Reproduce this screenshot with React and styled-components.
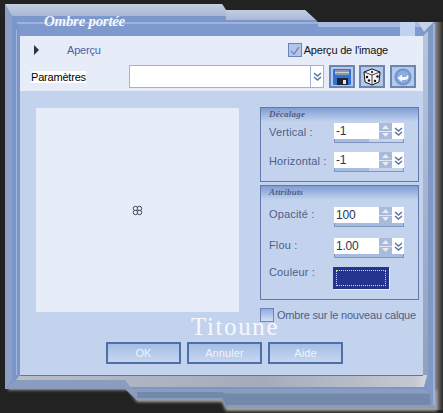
import React from "react";
import styled, { createGlobalStyle } from "styled-components";

const Global = createGlobalStyle`
    html, body { margin: 0; padding: 0; background: #222222; }
`;

const Shell = styled.div`
    position: relative;
    width: 443px;
    height: 413px;
    overflow: hidden;
    background: #222222;
    font-family: "Liberation Sans", Arial, sans-serif;
    font-size: 11px;
    letter-spacing: -0.2px;
`;

const Art = styled.svg`
    position: absolute;
    left: 0;
    top: 0;
`;

const Title = styled.div`
    position: absolute;
    left: 44px;
    top: 13px;
    font-family: "Liberation Serif", serif;
    font-style: italic;
    font-weight: bold;
    font-size: 15px;
    letter-spacing: -0.3px;
    color: #f4f7fd;
`;

const Window = styled.div`
    padding: 36px 20px 38px;
    position: relative;
`;

const Panel = styled.div`
    position: relative;
    height: 339px;
    background: #c3d3ee;
    display: flex;
    flex-direction: column;
`;

const Head = styled.div`
    height: 55px;
    box-sizing: border-box;
    background: #e6ecf8;
    padding: 6px 7px 0 14px;
    display: flex;
    flex-direction: column;
    gap: 7px;
`;

const PreviewRow = styled.div`
    height: 16px;
    display: flex;
    align-items: center;
`;

const Arrow = styled.span`
    width: 0;
    height: 0;
    border-left: 5px solid #2c3342;
    border-top: 5px solid transparent;
    border-bottom: 5px solid transparent;
`;

const PreviewLink = styled.span`
    margin-left: 28px;
    color: #4a5fa8;
`;

const ImageCheck = styled.label`
    margin-left: auto;
    margin-right: 28px;
    display: flex;
    align-items: center;
    gap: 2px;
    color: #101018;
`;

const Box = styled.span`
    flex: none;
    width: 14px;
    height: 14px;
    box-sizing: border-box;
    border: 1px solid #6a85b5;
    background: ${p => p.$checked ? "#b4c6e8" : "linear-gradient(#8fabdd, #d3e0f5)"};
    display: flex;
    align-items: center;
    justify-content: center;
`;

const ParamRow = styled.div`
    height: 23px;
    display: flex;
    align-items: center;
`;

const ParamLabel = styled.span`
    margin-left: -3px;
    width: 98px;
    color: #000000;
`;

const ParamText = styled.span`
    background: #ffffff;
`;

const Combo = styled.div`
    width: 195px;
    height: 23px;
    box-sizing: border-box;
    background: #ffffff;
    border: 1px solid #9fb3d8;
    display: flex;
    justify-content: flex-end;
`;

const ComboDrop = styled.div`
    width: 12px;
    border-left: 1px solid #9fb3d8;
    display: flex;
    align-items: center;
    justify-content: center;
`;

const ToolButton = styled.button`
    width: 26px;
    height: 23px;
    margin-left: ${p => p.$gap}px;
    padding: 0;
    box-sizing: border-box;
    border: 2px solid #6b86b4;
    background: #b4c8ea;
    display: flex;
    align-items: center;
    justify-content: center;
`;

const Body = styled.div`
    flex: 1;
    display: flex;
    padding: 16px 0 0 16px;
`;

const Preview = styled.div`
    width: 203px;
    height: 204px;
    margin-top: 1px;
    background: #e6ecf8;
    display: flex;
    align-items: center;
    justify-content: center;
`;

const Side = styled.div`
    margin-left: 21px;
    width: 159px;
    display: flex;
    flex-direction: column;
    gap: 3px;
`;

const Group = styled.div`
    height: ${p => p.$height}px;
    box-sizing: border-box;
    border: 1px solid #5f7aab;
`;

const GroupTitle = styled.div`
    height: 14px;
    padding-left: 8px;
    background: linear-gradient(#7f9dd3, #c3d3ee);
    font-family: "Liberation Serif", serif;
    font-style: italic;
    font-weight: bold;
    font-size: 9px;
    line-height: 13px;
    letter-spacing: 0.2px;
    color: #4d5f85;
`;

const Fields = styled.div`
    padding: ${p => p.$top}px 0 0 8px;
    display: flex;
    flex-direction: column;
    gap: ${p => p.$gap}px;
`;

const FieldRow = styled.div`
    display: flex;
    align-items: center;
    height: ${p => p.$height || 20}px;
    margin-top: ${p => p.$lift ? -p.$lift : 0}px;
    color: #4d6087;
`;

const FieldLabel = styled.span`
    width: 65px;
    padding-bottom: ${p => p.$raise || 2}px;
    letter-spacing: 0.15px;
`;

const Spin = styled.div`
    width: 70px;
    height: 20px;
    display: grid;
    grid-template-columns: 45px 13px 12px;
    grid-template-rows: 16px 4px;
`;

const SpinValue = styled.div`
    background: #ffffff;
    padding-left: 2px;
    line-height: 16px;
    color: #2b3550;
    font-size: 12px;
`;

const SpinButtons = styled.div`
    display: flex;
    flex-direction: column;
    gap: 1px;
    background: #dfe7f6;
`;

const SpinPart = styled.div`
    flex: 1;
    background: #a9bbd9;
    display: flex;
    align-items: center;
    justify-content: center;
`;

const SpinDrop = styled.div`
    background: #ffffff;
    display: flex;
    align-items: center;
    justify-content: center;
`;

const Slider = styled.div`
    grid-column: 1 / 4;
    border: 1px solid #7f96bf;
    border-top: none;
    background: #c5d3ec;
    box-sizing: border-box;
`;

const SliderFill = styled.div`
    height: 100%;
    background: #a5bbe0;
`;

const Swatch = styled.div`
    width: 56px;
    height: 22px;
    box-sizing: border-box;
    margin-left: -1px;
    background: #25358f;
    border: 2px solid #25358f;
    outline: 1px dotted #e8e860;
    outline-offset: -4px;
    box-shadow: 1px 1px 0 #e6ecf8;
`;

const LayerCheck = styled.label`
    margin-top: 5px;
    display: flex;
    align-items: center;
    gap: 3px;
    color: #4d6087;
    white-space: nowrap;
`;

const Signature = styled.div`
    position: absolute;
    left: 171px;
    top: 277px;
    font-family: "Liberation Serif", serif;
    font-size: 25px;
    letter-spacing: 1.6px;
    color: #f6f8fd;
`;

const Footer = styled.div`
    display: flex;
    gap: 6px;
    padding: 0 0 11px 86px;
`;

const ActionButton = styled.button`
    width: 75px;
    height: 22px;
    padding: 0;
    box-sizing: border-box;
    border: 2px solid #4f70a6;
    background: linear-gradient(#a5bde5, #c7d6f0);
    color: #eef3fc;
    font: inherit;
    letter-spacing: 0.1px;
`;

function Chevrons() {
    return (
        <svg width="9" height="9" viewBox="0 0 9 9" fill="none" stroke="#5c74a3" strokeWidth="1.5">
            <path d="M1 1l3.5 3L8 1M1 5l3.5 3L8 5" />
        </svg>
    );
}

function Triangle({ up }) {
    return (
        <svg width="7" height="4" viewBox="0 0 7 4">
            <path d={up ? "M3.5 0L7 4H0z" : "M0 0h7L3.5 4z"} fill="#e8eef9" />
        </svg>
    );
}

function SpinField({ value, fill }) {
    return (
        <Spin>
            <SpinValue>{value}</SpinValue>
            <SpinButtons>
                <SpinPart><Triangle up /></SpinPart>
                <SpinPart><Triangle /></SpinPart>
            </SpinButtons>
            <SpinDrop><Chevrons /></SpinDrop>
            <Slider><SliderFill style={{ width: fill + "%" }} /></Slider>
        </Spin>
    );
}

function Frame() {
    return (
        <Art width="443" height="413" viewBox="0 0 443 413">
            <defs>
                <linearGradient id="topBand" x1="0" y1="0" x2="0" y2="1">
                    <stop offset="0" stopColor="#c4cee0" />
                    <stop offset="1" stopColor="#a8b8d8" />
                </linearGradient>
                <linearGradient id="bottomBand" x1="0" y1="0" x2="1" y2="0">
                    <stop offset="0" stopColor="#b8bdc8" />
                    <stop offset="0.6" stopColor="#a4acbc" />
                    <stop offset="0.97" stopColor="#c4c8d0" />
                    <stop offset="1" stopColor="#d8dade" />
                </linearGradient>
                <linearGradient id="sideFade" x1="0" y1="0" x2="1" y2="0">
                    <stop offset="0" stopColor="#8a8a8a" />
                    <stop offset="1" stopColor="#2c2c2c" />
                </linearGradient>
                <linearGradient id="rightBevel" x1="0" y1="0" x2="0" y2="1">
                    <stop offset="0" stopColor="#b7c5df" />
                    <stop offset="1" stopColor="#8fa0bd" />
                </linearGradient>
                <filter id="soft" x="-5%" y="-5%" width="110%" height="110%">
                    <feGaussianBlur stdDeviation="1.6" />
                </filter>
            </defs>
            <rect x="435" y="22" width="8" height="388" fill="url(#sideFade)" />
            <path d="M8 385H125L137 402H222L226 411H437V390H8z" fill="#a6a6a6" filter="url(#soft)" />
            <path d="M5 4H222L226 10H305L318 22H435V408H226L222 400H137L125 389H5z" fill="#7d95c2" />

            <path d="M5 4H222L226 10V16H12z" fill="url(#topBand)" />
            <path d="M226 10H305L316 20H226z" fill="url(#topBand)" />
            <path d="M12 16H226V22H16z" fill="#7b98cc" />
            <path d="M16 22H318V24H18z" fill="#9db3dd" />
            <path d="M18 24H423V36H20z" fill="#7e99cd" />
            <path d="M318 22H435L428 27H318z" fill="#a6bae0" />
            <rect x="400" y="22" width="15" height="14" fill="#bfd2f0" />
            <path d="M418 22H433L424 32z" fill="#c6d2e6" />

            <path d="M5 4L12 16V380L5 389z" fill="#8ca0c5" />
            <path d="M12 16L20 28V375L12 380z" fill="#7a95ca" />
            <rect x="16" y="30" width="1" height="345" fill="#a3b7dc" />

            <path d="M423 36L433 26V407L423 375z" fill="#7f98c4" />
            <path d="M423 36L428 31V380L423 375z" fill="url(#rightBevel)" />
            <rect x="433" y="24" width="2" height="384" fill="#a3b2cc" />

            <path d="M15 381L20 375H423L427 375L424 387H130z" fill="url(#bottomBand)" />
            <path d="M5 389L15 380H125L132 389H424L430 393H226L222 400H137L125 389z" fill="#8a9dbe" />
            <path d="M137 392H222L226 394H430V405H226L222 398H137z" fill="#7389ac" />
            <rect x="228" y="405" width="207" height="3" fill="#8d9bb5" />
            <rect x="20" y="375" width="403" height="1" fill="#5d78a8" />
        </Art>
    );
}

function DiskIcon() {
    return (
        <svg width="18" height="16" viewBox="0 0 18 16">
            <rect width="18" height="16" rx="1" fill="#2f73d6" />
            <rect x="2" y="1" width="14" height="5" fill="#8c96a8" />
            <rect x="2" y="3" width="14" height="1" fill="#c9ced8" />
            <rect x="4" y="9" width="11" height="7" fill="#20242e" />
            <rect x="10" y="11" width="3" height="4" fill="#e4e8f0" />
        </svg>
    );
}

function DiceIcon() {
    return (
        <svg width="18" height="18" viewBox="0 0 18 18">
            <path d="M1 4l8-3 8 3-1 10-7 3-7-3z" fill="#f4f4f4" stroke="#14161c" />
            <path d="M9 7L1 4M9 7l8-3M9 7v10" fill="none" stroke="#14161c" strokeWidth="0.8" />
            <circle cx="4" cy="9" r="1.2" fill="#111" />
            <circle cx="6" cy="12.5" r="1.2" fill="#111" />
            <circle cx="12" cy="13" r="1.2" fill="#111" />
            <circle cx="14.5" cy="8.5" r="1.2" fill="#111" />
            <circle cx="9" cy="4" r="1.1" fill="#111" />
        </svg>
    );
}

function BackIcon() {
    return (
        <svg width="18" height="18" viewBox="0 0 18 18">
            <circle cx="9" cy="9" r="8.5" fill="#6f93cf" />
            <circle cx="9" cy="9" r="6.5" fill="#8cabdd" />
            <path d="M3.5 10L8 6.5V9H11.5C12.5 9 13 8.2 13 7L14.5 8C14.5 10.5 13.2 12 11 12H8V14z" fill="#f3f6fc" />
        </svg>
    );
}

function CenterIcon() {
    return (
        <svg width="11" height="11" viewBox="0 0 11 11" fill="#eef2fa" stroke="#3a4258" strokeWidth="1">
            <circle cx="3.5" cy="3.5" r="2.2" />
            <circle cx="7.5" cy="3.5" r="2.2" />
            <circle cx="3.5" cy="7.5" r="2.2" />
            <circle cx="7.5" cy="7.5" r="2.2" />
        </svg>
    );
}

export default function App() {
    return (
        <Shell>
            <Global />
            <Frame />
            <Title>Ombre portée</Title>
            <Window>
                <Panel>
                    <Head>
                        <PreviewRow>
                            <Arrow />
                            <PreviewLink>Aperçu</PreviewLink>
                            <ImageCheck>
                                <Box $checked>
                                    <svg width="10" height="9" viewBox="0 0 10 9" fill="none" stroke="#6f8bbd" strokeWidth="1.4">
                                        <path d="M1 5l3 3 5-7" />
                                    </svg>
                                </Box>
                                Aperçu de l'image
                            </ImageCheck>
                        </PreviewRow>
                        <ParamRow>
                            <ParamLabel><ParamText>Paramètres</ParamText></ParamLabel>
                            <Combo>
                                <ComboDrop><Chevrons /></ComboDrop>
                            </Combo>
                            <ToolButton $gap={5}><DiskIcon /></ToolButton>
                            <ToolButton $gap={4}><DiceIcon /></ToolButton>
                            <ToolButton $gap={5}><BackIcon /></ToolButton>
                        </ParamRow>
                    </Head>
                    <Body>
                        <Preview><CenterIcon /></Preview>
                        <Side>
                            <Group $height={75}>
                                <GroupTitle>Décalage</GroupTitle>
                                <Fields $top={1} $gap={9}>
                                    <FieldRow>
                                        <FieldLabel>Vertical :</FieldLabel>
                                        <SpinField value="-1" fill={50} />
                                    </FieldRow>
                                    <FieldRow>
                                        <FieldLabel>Horizontal :</FieldLabel>
                                        <SpinField value="-1" fill={50} />
                                    </FieldRow>
                                </Fields>
                            </Group>
                            <Group $height={115}>
                                <GroupTitle>Attributs</GroupTitle>
                                <Fields $top={7} $gap={11}>
                                    <FieldRow>
                                        <FieldLabel $raise={7}>Opacité :</FieldLabel>
                                        <SpinField value="100" fill={100} />
                                    </FieldRow>
                                    <FieldRow>
                                        <FieldLabel $raise={7}>Flou :</FieldLabel>
                                        <SpinField value="1.00" fill={100} />
                                    </FieldRow>
                                    <FieldRow $height={22} $lift={2}>
                                        <FieldLabel $raise={13}>Couleur :</FieldLabel>
                                        <Swatch />
                                    </FieldRow>
                                </Fields>
                            </Group>
                            <LayerCheck>
                                <Box />
                                Ombre sur le nouveau calque
                            </LayerCheck>
                        </Side>
                    </Body>
                    <Signature>Titoune</Signature>
                    <Footer>
                        <ActionButton>OK</ActionButton>
                        <ActionButton>Annuler</ActionButton>
                        <ActionButton>Aide</ActionButton>
                    </Footer>
                </Panel>
            </Window>
        </Shell>
    );
}
